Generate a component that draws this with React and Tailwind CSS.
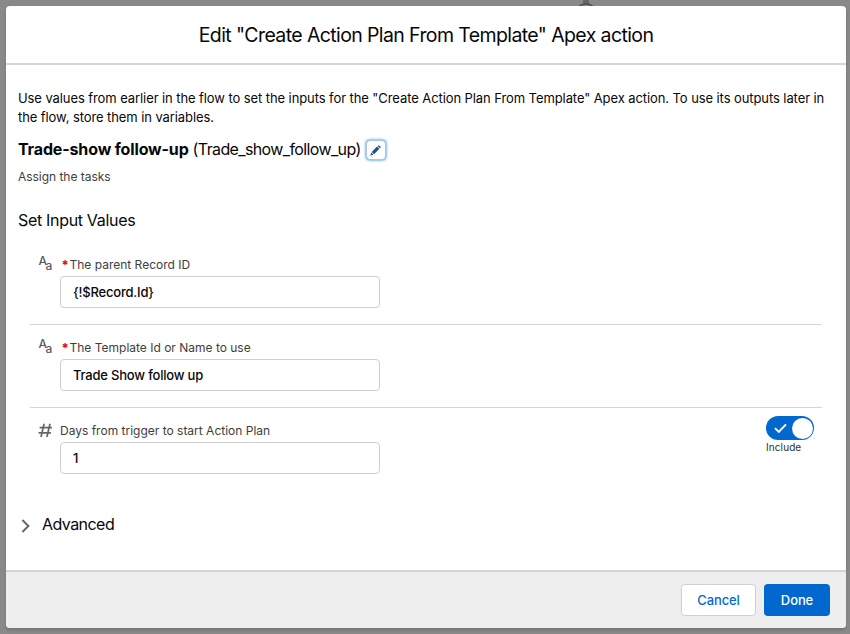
import React from "react";

function TextIcon() {
  return (
    <div className="relative h-5 w-[15px] shrink-0 text-[#5c5c5c]">
      <span className="absolute left-[0.5px] top-[-2px] text-[12px] leading-[14px] font-medium">A</span>
      <span className="absolute left-[7.5px] top-[2px] text-[12px] leading-[16px] font-medium">a</span>
    </div>
  );
}

function HashIcon() {
  return (
    <svg className="mt-[0.5px] h-[15px] w-[15px] shrink-0" viewBox="0 0 15 15" fill="none" stroke="#666" strokeWidth="1.7">
      <path d="M6.1 .7 3 14M12 .7 8.9 14M1.6 4.7h12.3M.6 9.9h12.3" />
    </svg>
  );
}

function InputRow({ icon, label, required, value, toggle }) {
  return (
    <div className="flex h-[83px] pl-2 pt-[14px]">
      {icon}
      <div className="ml-[7px] w-[320px]">
        <label className="flex h-5 items-center whitespace-nowrap pb-[3px] text-[12px] leading-[18px] text-[#3e3e3c]">
          {required && <span className="ml-[1.5px] mr-0.5 w-[6px] text-[13px] font-bold text-[#ea001e]">*</span>}
          <span>{label}</span>
        </label>
        <div className="flex h-8 items-center rounded border border-[#cfcfcf] bg-white px-3 pt-0.5 text-[13px] font-[450] tracking-[-0.2px] text-[#080808]">
          {value}
        </div>
      </div>
      {toggle && (
        <div className="-mt-1.5 ml-auto mr-2 w-12">
          <div className="flex h-6 w-12 items-center justify-between rounded-full bg-[#0068cf] pl-2 pr-[1px]">
            <svg className="h-3.5 w-3.5" viewBox="0 0 14 14" fill="none" stroke="white" strokeWidth="1.9">
              <path d="M1 7.2 4.8 11 12 3.4" />
            </svg>
            <div className="h-[21px] w-[21px] rounded-full bg-white" />
          </div>
          <div className="text-[10px] leading-[14px] tracking-[0.1px] text-[#2e2e2e]">Include</div>
        </div>
      )}
    </div>
  );
}

export default function App() {
  return (
    <div className="relative h-[634px] w-[850px] overflow-hidden bg-[#898989] p-1.5 pr-1 font-['Inter','Liberation_Sans',sans-serif] text-[#080707]">
      <svg className="absolute left-[576px] top-0 h-5 w-5" viewBox="0 0 20 20">
        <path d="M7 0h6v4H7z" fill="#666" />
        <circle cx="10" cy="13" r="9.2" fill="#898989" stroke="#514f4f" strokeWidth="1.8" />
      </svg>
      <div className="relative flex h-[622px] w-[840px] flex-col overflow-hidden rounded bg-white shadow-[0_2px_3px_rgba(0,0,0,0.16)]">
        <header className="flex h-[59px] shrink-0 items-center justify-center border-b-2 border-[#d4d4d4] pt-0.5">
          <h1 className="whitespace-nowrap text-[19.5px] leading-[25px] tracking-[-0.61px]">Edit "Create Action Plan From Template" Apex action</h1>
        </header>
        <main className="grow px-3 pt-6">
          <p className="whitespace-nowrap text-[13px] leading-[19px] tracking-[-0.087px]">
            Use values from earlier in the flow to set the inputs for the "Create Action Plan From Template" Apex action. To use its outputs later in
            <br />
            the flow, store them in variables.
          </p>
          <div className="mt-[11px] flex h-6 items-center whitespace-nowrap text-[16px] leading-[22px]">
            <strong className="mb-0.5 font-bold tracking-[-0.15px]">Trade-show follow-up</strong>
            <span className="mb-0.5 ml-[4px] tracking-[-0.62px]">(Trade_show_follow_up)</span>
            <span className="ml-[5px] flex h-5 w-5 items-center justify-center rounded border border-[#a9c6e4] bg-white shadow-[0_0_3px_#0176d3]">
              <svg className="h-[11px] w-[11px]" viewBox="0 0 12 12" fill="#22508f">
                <path d="M1.9 7.5 7.7 1.7 10.2 4.2 4.4 10 1.9 7.5ZM8.3 1.1 9 .5Q9.5.1 10 .5L11.5 2q.4.5 0 1l-.7.6ZM1.4 8.1 3.8 10.5.6 11.4q-.3 0-.2-.3Z" />
              </svg>
            </span>
          </div>
          <p className="mt-[6px] text-[12px] leading-[18px] tracking-[-0.03px] text-[#3e3e3c]">Assign the tasks</p>
          <h2 className="mt-[22px] text-[16px] leading-6 tracking-[-0.32px]">Set Input Values</h2>
          <section className="ml-3 mr-3 mt-[10px] divide-y divide-[#d4d4d4]">
            <InputRow icon={<TextIcon />} label="The parent Record ID" required value={<span>{"{!$Record.Id}"}</span>} />
            <InputRow icon={<TextIcon />} label="The Template Id or Name to use" required value="Trade Show follow up" />
            <InputRow icon={<HashIcon />} label="Days from trigger to start Action Plan" value="1" toggle />
          </section>
          <div className="mt-[21px] flex h-6 items-center">
            <svg className="ml-[3px] mt-[3px] h-4 w-[10px]" viewBox="0 0 10 16" fill="none" stroke="#666" strokeWidth="1.9">
              <path d="m1.4 2 6 6-6 6" />
            </svg>
            <span className="ml-[11px] text-[16px] tracking-[-0.55px]">Advanced</span>
          </div>
        </main>
        <footer className="flex h-[58px] shrink-0 justify-end gap-2 border-t-2 border-[#d4d4d4] bg-[#eee] pr-4 pt-3">
          <button className="h-8 w-[75px] rounded border border-[#d0d0d0] bg-white pt-0.5 text-[13px] font-[450] tracking-[-0.15px] text-[#006dce]">Cancel</button>
          <button className="h-8 w-[66px] rounded bg-[#0068cf] pt-0.5 text-[13px] font-[450] tracking-[-0.1px] text-white">Done</button>
        </footer>
      </div>
    </div>
  );
}
